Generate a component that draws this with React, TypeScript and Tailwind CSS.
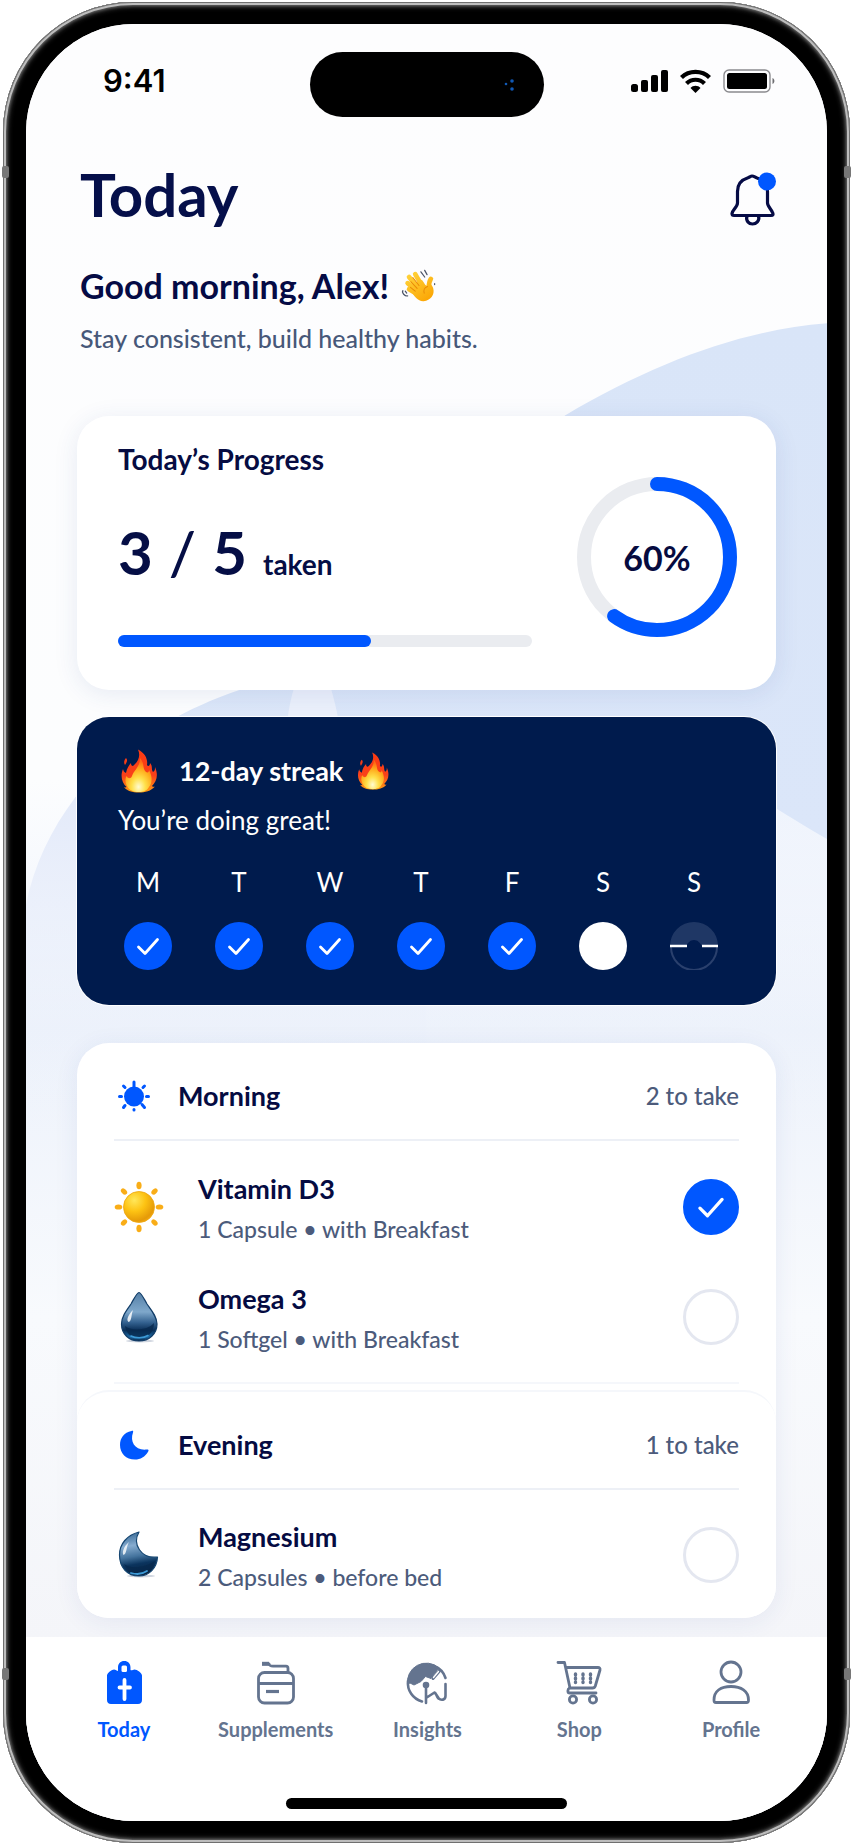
import { useState } from "react";

type Supplement = {
  id: string;
  name: string;
  dose: string;
  icon: React.ReactNode;
};

const days = [
  { label: "M", state: "done" },
  { label: "T", state: "done" },
  { label: "W", state: "done" },
  { label: "T", state: "done" },
  { label: "F", state: "done" },
  { label: "S", state: "today" },
  { label: "S", state: "next" },
];

/* ---------- Icons ---------- */

function CheckMark({ className }: { className: string }) {
  return (
    <svg viewBox="0 0 24 24" fill="none" stroke="#fff" strokeWidth="2.8" strokeLinejoin="round" strokeLinecap="round" className={className} aria-hidden="true">
      <path d="M2.5 13 L9 19.5 L21.5 5.5" />
    </svg>
  );
}

function StatusIcons() {
  return (
    <svg width="146" height="26" viewBox="0 0 146 26" aria-hidden="true">
      <rect x="1" y="16" width="7" height="8" rx="2.5" />
      <rect x="11" y="12" width="7" height="12" rx="2" />
      <rect x="21" y="7" width="7" height="17" rx="2" />
      <rect x="31" y="2" width="7" height="22" rx="2" />
      <g fill="none" stroke="#000" strokeWidth="4.2">
        <path d="M51.5 9.5 C59 2 72 2 79.5 9.5" />
        <path d="M56.5 15.5 C61.5 10.5 69.5 10.5 74.5 15.5" />
      </g>
      <path d="M60.5 20 C63 17 68 17 70.5 20 L65.5 25 Z" />
      <rect x="94" y="2" width="46" height="22" rx="5" fill="none" stroke="#8b8b8f" strokeWidth="1.4" />
      <rect x="97" y="5" width="40" height="16" rx="2.5" />
      <path d="M142.5 10 C145 11 145 15 142.5 16 Z" fill="#6d6d70" />
    </svg>
  );
}

function BellIcon() {
  return (
    <svg width="46" height="54" viewBox="0 0 46 54" fill="none" stroke="#050b45" strokeWidth="3.2" strokeLinejoin="round" aria-hidden="true">
      <path d="M22 4 C20.5 4 19.5 5.5 17.5 6 C11 8 7.5 13 7.5 19.5 V31 C7.5 35 2.5 38 2 41.5 C2 43 2.5 43.5 4 43.5 H41 C43 43.5 43.5 42.5 42.5 40.5 C41 37 37.5 34 37.5 31 V19.5 C37.5 13 33.5 8 27 6 C25 5.5 24 4 22 4 Z" />
      <path d="M17 44 C15.500 49 19 52 22.500 52 C26 52 30 49 28.500 44" />
      <circle cx="37" cy="9.500" r="9" fill="#0057ff" stroke="none" />
    </svg>
  );
}

function WaveHand() {
  return (
    <svg width="36" height="36" viewBox="6 8 38 37" fill="none" strokeLinecap="round" role="img" aria-label="waving hand">
      <defs>
        <linearGradient id="hand" gradientUnits="userSpaceOnUse" x1="14" y1="14" x2="34" y2="42">
          <stop offset="0" stopColor="#ffd23a" />
          <stop offset="1" stopColor="#fba605" />
        </linearGradient>
      </defs>
      <g stroke="url(#hand)" strokeWidth="5">
        <path d="M29 28 L21 14" />
        <path d="M25 30 L14.5 17" />
        <path d="M23 32 L13 23.5" />
        <path d="M23 35 L14.5 30" />
        <path d="M35 32 C36 28 34.5 23 37.5 19" />
      </g>
      <path d="M19 25 L28 20 C31 24 32 27 34 26 C37 23 39 26 40 29 C42 36 37 42 30 42.5 C24 43 20 37 16.5 32 Z" fill="url(#hand)" />
      <g stroke="#e98a06" strokeWidth="1.1">
        <path d="M18.5 17.5 L25 26" />
        <path d="M16.5 22 L23 29" />
        <path d="M16 28 L21 32" />
        <path d="M34 27 C31 28 29.5 31 30.5 34" />
      </g>
      <g stroke="#4c5568" strokeWidth="1.3">
        <path d="M27 11.5 L31 17" />
        <path d="M31 10 L33.5 14.5" />
        <path d="M8 31.5 C6.5 33.5 10 37.5 13 37" />
        <path d="M10.5 32 L12 34" />
        <path d="M41.5 24 V25" />
      </g>
    </svg>
  );
}

function Flame({ className }: { className: string }) {
  return (
    <svg viewBox="0 0 36 44" className={className} role="img" aria-label="fire">
      <defs>
        <linearGradient id="flameOuter" x1="0" y1="0" x2="0" y2="1">
          <stop offset="0" stopColor="#fb3a12" />
          <stop offset="0.6" stopColor="#f9401a" />
          <stop offset="1" stopColor="#ff9d13" />
        </linearGradient>
        <radialGradient id="flameInner" cx="0.5" cy="0.85" r="0.75">
          <stop offset="0" stopColor="#fffbd0" />
          <stop offset="0.35" stopColor="#ffe04a" />
          <stop offset="0.7" stopColor="#ffab1c" />
          <stop offset="1" stopColor="#ff6a14" />
        </radialGradient>
      </defs>
      <path d="M17 0.5 C24 4 27 10 26 16 C27 18 29 17 29 14 C32 17 30 20 32 23 C34 22 34 20 34 18 C38 27 35 33 31 37 C32 38 33 38 34 37.5 C30 42 24 43.5 18 43.5 C11 43.5 6 42 3 38 C4 38.5 5 38.5 5.5 38 C1 34 -1 27 2 20 C2.5 22 3 23 5 24 C6 19 8 16 10 14 C10 16 10.5 17 12 17 C17 13 20 7 17 0.5 Z" fill="url(#flameOuter)" />
      <path d="M19 9 C24 15 21 19 25 23 C27 24 28 23 28 21 C32 28 31 35 28 38 C26 42 22 43 18 43 C12 43 8 41 6 37 C4 33 4 30 5.5 27 C7 30 10 30 11 27 C13 21 19 18 19 9 Z" fill="url(#flameInner)" />
      <path d="M5 9 C7 11 6 13 4 16 C2.5 14 3 11 5 9 Z" fill="#f43c17" />
    </svg>
  );
}

function SunGlyph() {
  return (
    <svg width="32" height="32" viewBox="0 0 32 32" fill="#0057ff" stroke="#0057ff" strokeWidth="3" strokeLinecap="round" aria-hidden="true">
      <circle cx="16" cy="16.5" r="10" stroke="none" />
      <path d="M16 2 V8 M16 29.5 V30 M1.5 16.5 H3.5 M28.5 16.5 H30.5 M5.5 6 L7 7.5 M26.5 6 L25 7.5 M5.5 27.5 L7 25.5 M26.5 27.5 L24 24.5" />
    </svg>
  );
}

function MoonGlyph() {
  return (
    <svg width="32" height="32" viewBox="0 0 32 32" fill="#0057ff" aria-hidden="true">
      <path d="M13.5 2 C15 1.5 15.5 2 15 3.5 C11.5 13 17.5 22 29 20.5 C30.5 20.5 31 21 30.2 22.5 C27 28 22.5 30.5 17 30.5 C8 30.5 2 24.5 2 16 C2 9 6 3.5 13.5 2 Z" />
    </svg>
  );
}

function SunIcon() {
  return (
    <svg width="50" height="52" viewBox="0 0 50 52" aria-hidden="true">
      <defs>
        <radialGradient id="sunBall" cx="0.35" cy="0.28" r="0.8">
          <stop offset="0" stopColor="#ffe75a" />
          <stop offset="0.45" stopColor="#fdc313" />
          <stop offset="0.85" stopColor="#e59a08" />
          <stop offset="1" stopColor="#f5ae12" />
        </radialGradient>
      </defs>
      <g fill="#f9ad17">
        <ellipse cx="25" cy="4.5" rx="2.6" ry="3.8" />
        <ellipse cx="25" cy="47.5" rx="2.6" ry="3.8" />
        <ellipse cx="4.5" cy="26" rx="3.8" ry="2.6" />
        <ellipse cx="45.5" cy="26" rx="3.8" ry="2.6" />
        <ellipse cx="10" cy="10.5" rx="3.6" ry="2.5" transform="rotate(45 10 10.5)" />
        <ellipse cx="40.5" cy="10.5" rx="3.6" ry="2.5" transform="rotate(-45 40.5 10.5)" />
        <ellipse cx="10" cy="41.5" rx="3.6" ry="2.5" transform="rotate(-45 10 41.5)" />
        <ellipse cx="40.5" cy="41.5" rx="3.6" ry="2.5" transform="rotate(45 40.5 41.5)" />
      </g>
      <circle cx="25" cy="26" r="15.5" fill="url(#sunBall)" stroke="#eda60f" strokeWidth="0.8" />
    </svg>
  );
}

function DropIcon() {
  return (
    <svg width="50" height="52" viewBox="0 0 50 52" aria-hidden="true">
      <defs>
        <linearGradient id="drop" x1="0" y1="0" x2="0" y2="1">
          <stop offset="0" stopColor="#557fa6" />
          <stop offset="0.4" stopColor="#7fa8cb" />
          <stop offset="0.62" stopColor="#33618f" />
          <stop offset="0.78" stopColor="#0a2f57" />
          <stop offset="0.92" stopColor="#1c6ba6" />
          <stop offset="1" stopColor="#06203f" />
        </linearGradient>
      </defs>
      <ellipse cx="26" cy="50" rx="14" ry="1.5" fill="#cfd5df" />
      <path d="M25 1.5 C27 1.5 29 6 33 13 C38 20 43 26 43 33 C43 43 35 50 25 50 C15 50 7.5 43 7.5 33 C7.5 26 12 20 17 13 C21 6 23 1.5 25 1.5 Z" fill="url(#drop)" stroke="#123d68" strokeWidth="1.2" />
      <path d="M11 35 C17 40 33 40 40 32 C40 42 33 47 25 47 C17 47 12 42 11 35 Z" fill="#08294e" opacity="0.8" />
      <path d="M17 45 C22 47.5 29 47.5 34 44.5" fill="none" stroke="#3d9ad6" strokeWidth="1.6" strokeLinecap="round" />
      <path d="M19 19 C14 24 12 29 14.5 31 C18 30 17 24 19 19 Z" fill="#fff" opacity="0.85" />
    </svg>
  );
}

function MoonIcon() {
  return (
    <svg width="50" height="52" viewBox="0 0 50 52" aria-hidden="true">
      <defs>
        <linearGradient id="moon" x1="0" y1="0" x2="0.15" y2="1">
          <stop offset="0" stopColor="#2c5f8c" />
          <stop offset="0.35" stopColor="#86acd0" />
          <stop offset="0.6" stopColor="#44739d" />
          <stop offset="0.78" stopColor="#0b345e" />
          <stop offset="1" stopColor="#082341" />
        </linearGradient>
      </defs>
      <ellipse cx="27" cy="47" rx="14" ry="1.4" fill="#cfd5df" />
      <path d="M25 3 C18 15 27 30 43.5 28 C43 39 35 47 25 47 C13 47 5.5 38 5.5 26 C5.5 15 13 6 25 3 Z" fill="url(#moon)" stroke="#164671" strokeWidth="1.2" strokeLinejoin="round" />
      <path d="M10 35 C18 41 32 38 41 32 C38 40 32 44 25 44 C18 44 13 41 10 35 Z" fill="#08294e" opacity="0.8" />
      <path d="M17 44 C22 45.5 28 45.5 33 42" fill="none" stroke="#3d9ad6" strokeWidth="1.8" strokeLinecap="round" />
      <path d="M15 13 C9 18 8 24 9.5 26 C13 25 12 18 15 13 Z" fill="#fff" opacity="0.8" />
    </svg>
  );
}

function TodayIcon() {
  return (
    <svg width="48" height="48" viewBox="0 0 48 48" aria-hidden="true">
      <path d="M18 12 V8.5 C18 4.5 20.5 2 24.3 2 C28 2 30.5 4.5 30.5 8.5 V11 C31.5 12 33 10.5 34.5 10.5 C37 10.5 42 14 42 16.5 V41 C42 43.5 40.5 45 38 45 H11 C8.5 45 7 43.5 7 41 V16.5 C7 14 12 10.5 14 10.5 C15.5 10.5 17 12 18 12 Z" fill="#0057ff" />
      <rect x="21.5" y="6.5" width="5.5" height="6.5" rx="1.5" fill="#fff" />
      <path d="M24.5 21 V40 M19.5 28.5 H30" stroke="#fff" strokeWidth="3.8" strokeLinecap="round" />
    </svg>
  );
}

function SupplementsIcon() {
  return (
    <svg width="48" height="48" viewBox="0 0 48 48" fill="none" stroke="#64748f" strokeWidth="2.8" strokeLinejoin="round" aria-hidden="true">
      <rect x="6.500" y="13.500" width="35" height="30.500" rx="6" />
      <path d="M7 24.500 H41" />
      <path d="M14 32.500 H27" strokeWidth="3.2" />
      <path d="M10 4.800 H17 C17.500 7 18.500 7.200 21 7.200 H34 C35.800 7.200 36 8 36 9.500 V13" />
      <path d="M10 4.800 H17" strokeWidth="4" />
    </svg>
  );
}

function InsightsIcon() {
  return (
    <svg width="48" height="48" viewBox="9 9 48 48" fill="none" stroke="#64748f" strokeWidth="2.600" strokeLinecap="round" strokeLinejoin="round" aria-hidden="true">
      <path d="M13.500 35 A19 19 0 0 1 45 18 L37 28.500 L31.500 26.500 L27 31.500 L20 35 L16 33 Z" fill="#64748f" strokeWidth="1" />
      <path d="M14 31 A19 19 0 0 0 28 51.500 M40 16 A19 19 0 0 1 51.500 28" />
      <path d="M45.500 21 L39 28.500" strokeWidth="3" />
      <path d="M44.500 21.500 L39.500 27.500" stroke="#fff" strokeWidth="1.400" />
      <path d="M32 36 V53 M32 48 L40.500 42.500 C42 42 42 46 44.500 48.500 M51.500 34 V46 C51.500 50 47 51 44.500 48 L41.500 43.500" />
      <circle cx="32" cy="35" r="2" fill="#64748f" />
    </svg>
  );
}

function ShopIcon() {
  return (
    <svg width="48" height="48" viewBox="0 0 48 48" fill="none" stroke="#64748f" strokeWidth="2.800" strokeLinecap="round" strokeLinejoin="round" aria-hidden="true">
      <path d="M3 3.500 H9.500 L15 29 H37.500 C39 29 39.800 28.500 40.300 27 L45 11 C45.300 9.500 44.500 8.500 43 8.500 H10.500" />
      <path d="M14.500 29 C12.500 30 12 34 15 34 H41" />
      <path d="M20.500 15 V23.500 M28 15 V23.500 M35.500 15 V23.500" strokeWidth="3.400" strokeDasharray="1 3" />
      <circle cx="18" cy="40.500" r="3.600" />
      <circle cx="38" cy="40.500" r="3.600" />
    </svg>
  );
}

function ProfileIcon() {
  return (
    <svg width="48" height="48" viewBox="0 0 48 48" fill="none" stroke="#64748f" strokeWidth="2.800" strokeLinejoin="round" aria-hidden="true">
      <circle cx="24" cy="13" r="10" />
      <path d="M7 41 C7 32 14 27.500 24 27.500 C34 27.500 41.500 32 41.500 41 C41.500 43 41 43.500 39.500 43.500 H9 C7.500 43.500 7 43 7 41 Z" />
    </svg>
  );
}

/* ---------- Data ---------- */

const morning: Supplement[] = [
  { id: "vitamin-d3", name: "Vitamin D3", dose: "1 Capsule • with Breakfast", icon: <SunIcon /> },
  { id: "omega-3", name: "Omega 3", dose: "1 Softgel • with Breakfast", icon: <DropIcon /> },
];

const evening: Supplement[] = [
  { id: "magnesium", name: "Magnesium", dose: "2 Capsules • before bed", icon: <MoonIcon /> },
];

const tabs = [
  { label: "Today", icon: <TodayIcon /> },
  { label: "Supplements", icon: <SupplementsIcon /> },
  { label: "Insights", icon: <InsightsIcon /> },
  { label: "Shop", icon: <ShopIcon /> },
  { label: "Profile", icon: <ProfileIcon /> },
];

/* ---------- Sections ---------- */

function Backdrop() {
  return (
    <svg className="absolute inset-0 h-full w-full" viewBox="0 0 801 1795" preserveAspectRatio="none" aria-hidden="true">
      <defs>
        <linearGradient id="page" x1="0" y1="0" x2="0" y2="1">
          <stop offset="0" stopColor="#fdfdfe" />
          <stop offset="0.42" stopColor="#fcfdfe" />
          <stop offset="0.5" stopColor="#f4f7fd" />
          <stop offset="0.56" stopColor="#edf2fb" />
          <stop offset="0.72" stopColor="#f8fafd" />
          <stop offset="0.9" stopColor="#f4f5f9" />
        </linearGradient>
        <linearGradient id="leftBlob" x1="0" y1="0" x2="0" y2="1">
          <stop offset="0" stopColor="#d9e5f8" />
          <stop offset="0.35" stopColor="#e6ecfa" />
          <stop offset="1" stopColor="#edf2fb" stopOpacity="0" />
        </linearGradient>
        <linearGradient id="rightBlob" x1="0" y1="0" x2="0" y2="1">
          <stop offset="0" stopColor="#d9e5f8" />
          <stop offset="1" stopColor="#dbe6f9" />
        </linearGradient>
        <linearGradient id="lowWave" x1="0" y1="0" x2="0" y2="1">
          <stop offset="0" stopColor="#eaf0fc" />
          <stop offset="1" stopColor="#edf2fb" stopOpacity="0" />
        </linearGradient>
      </defs>
      <rect width="801" height="1795" fill="url(#page)" />
      <path d="M0 880 C8 840 25 805 49 773 C85 730 140 690 214 665 C260 645 320 645 400 650 V1100 H0 Z" fill="url(#leftBlob)" />
      <path d="M300 640 H801 V1100 H300 Z" fill="url(#lowWave)" />
      <path d="M801 299 C713 306 628 339 539 391 L290 660 V700 L730 770 C755 787 780 802 801 814 Z" fill="url(#rightBlob)" />
      <path d="M261 700 C263 680 266 670 269 660 H304 C308 675 311 685 313 700 Z" fill="#ebf0fb" />
    </svg>
  );
}

function DayMark({ state }: { state: string }) {
  if (state === "done") {
    return (
      <span className="flex size-12 items-center justify-center rounded-full bg-[#0057ff]">
        <CheckMark className="size-6" />
      </span>
    );
  }
  if (state === "today") {
    return <span className="size-12 rounded-full bg-white" />;
  }
  return (
    <svg width="48" height="48" viewBox="0 0 48 48" fill="none" aria-hidden="true">
      <path d="M0 24 A24 24 0 0 1 48 24 H32 C30 21 28 18 24 18 C20 18 18 21 16 24 Z" fill="#1f3765" />
      <path d="M1 25 A23 23 0 0 0 47 25" stroke="#2a406d" strokeWidth="2" />
      <path d="M0 24 H17 M32 24 H48" stroke="#fff" strokeWidth="2.4" />
    </svg>
  );
}

function SectionHeader({ icon, title, note }: { icon: React.ReactNode; title: string; note: string }) {
  return (
    <div className="flex items-center border-b-2 border-[#edf0f6] pb-[27px] pl-1">
      {icon}
      <h2 className="ml-7 flex-1 text-[27px] leading-8 font-bold text-[#050b42]">{title}</h2>
      <span className="text-2xl font-medium text-[#4c5b7b]">{note}</span>
    </div>
  );
}

function SupplementRow({ item, taken, onToggle }: { item: Supplement; taken: boolean; onToggle: () => void }) {
  return (
    <li className="flex h-[110px] items-center">
      {item.icon}
      <label htmlFor={item.id} className="ml-[34px] flex-1 pt-1">
        <span className="block text-[27px] leading-10 font-bold text-[#050b42]">{item.name}</span>
        <span className="block text-[23px] leading-10 font-medium text-[#4c5b7b]">{item.dose}</span>
      </label>
      <span className="relative size-14">
        <input
          id={item.id}
          type="checkbox"
          checked={taken}
          onChange={onToggle}
          className="block size-14 appearance-none rounded-full border-3 border-[#e4e7f0] bg-white checked:border-[#0057ff] checked:bg-[#0057ff]"
        />
        {taken && <CheckMark className="pointer-events-none absolute inset-[14px] size-7" />}
      </span>
    </li>
  );
}

export default function App() {
  const [taken, setTaken] = useState<string[]>(["vitamin-d3"]);
  const [tab, setTab] = useState("Today");

  const toggle = (id: string) => {
    setTaken((prev) => (prev.includes(id) ? prev.filter((t) => t !== id) : [...prev, id]));
  };

  return (
    <div className="bg-white px-[3px] py-0.5 font-['Lato','Open_Sans',sans-serif]">
      {/* Phone body */}
      <div className="relative rounded-[130px] bg-black px-[23px] py-[22px] shadow-[inset_0_0_0_1px_#6f6f6f,inset_0_0_0_3px_#bdbdbd,inset_0_0_3px_4px_#6a6a6a,inset_0_0_4px_6px_#262626]">
        <span className="absolute top-[164px] -left-px h-3 w-[7px] rounded-xs bg-[#777]" />
        <span className="absolute top-[164px] -right-px h-3 w-[7px] rounded-xs bg-[#777]" />
        <span className="absolute bottom-[163px] -left-px h-3 w-[7px] rounded-xs bg-[#777]" />
        <span className="absolute -right-px bottom-[163px] h-3 w-[7px] rounded-xs bg-[#777]" />

        <div className="relative overflow-hidden rounded-[108px] bg-white">
          <Backdrop />

          {/* Status bar */}
          <div className="relative grid grid-cols-[1fr_auto_1fr] items-center px-[51px] pt-7">
            <span className="pb-2 pl-[26px] font-['Inter',sans-serif] text-[31px] leading-9 font-semibold text-black">9:41</span>
            <div className="flex h-[65px] w-[234px] items-center justify-end rounded-full bg-black pr-[27px]">
              <svg width="14" height="14" viewBox="0 0 14 14" fill="#1159b5" aria-hidden="true">
                <circle cx="3" cy="6" r="1.3" />
                <circle cx="9" cy="3" r="1.8" />
                <circle cx="9" cy="11" r="1.8" />
              </svg>
            </div>
            <div className="flex justify-end pb-2">
              <StatusIcons />
            </div>
          </div>

          <main className="relative px-[51px]">
            <header className="pt-[47px] pl-[3px]">
              <div className="flex items-start justify-between">
                <h1 className="text-[60px] leading-[60px] font-bold text-[#050f4a]">Today</h1>
                <button type="button" aria-label="Notifications" className="mt-2">
                  <BellIcon />
                </button>
              </div>
              <p className="mt-10 flex items-center gap-3 text-[34px] leading-10 font-bold text-[#050b45]">
                Good morning, Alex! <WaveHand />
              </p>
              <p className="mt-4 text-[25px] leading-8 font-medium text-[#475879]">Stay consistent, build healthy habits.</p>
            </header>

            {/* Progress */}
            <section className="mt-[62px] flex gap-[45px] rounded-[32px] bg-white pt-[27px] pr-[39px] pb-[43px] pl-[41px] shadow-[0_4px_24px_rgba(40,70,150,0.1)]">
              <div className="flex-1">
                <h2 className="text-[28px] leading-8 font-bold text-[#060c42]">Today’s Progress</h2>
                <p className="mt-[47px] flex items-baseline text-[60px] leading-[60px] font-bold text-[#050e45]">
                  <span>3</span>
                  <span className="mx-4 font-medium">/</span>
                  <span>5</span>
                  <span className="ml-4 text-[28px] leading-8">taken</span>
                </p>
                <div role="progressbar" aria-label="Taken today" aria-valuenow={60} className="mt-[53px] h-3 rounded-full bg-[#eaecf0]">
                  <div className="h-3 w-[61%] rounded-full bg-[#0057ff]" />
                </div>
              </div>
              <div className="relative mb-[10px] size-40 self-end">
                <svg viewBox="0 0 160 160" fill="none" strokeWidth="14" className="size-40 -rotate-90" aria-hidden="true">
                  <circle cx="80" cy="80" r="73" stroke="#eaecf0" />
                  <circle cx="80" cy="80" r="73" stroke="#0057ff" strokeLinecap="round" pathLength="100" strokeDasharray="60 40" />
                </svg>
                <span className="absolute inset-0 flex items-center justify-center text-[34px] font-bold text-[#060b3f]">60%</span>
              </div>
            </section>

            {/* Streak */}
            <section className="mt-[27px] rounded-[32px] bg-[#001b4d] pt-8 pr-[58px] pb-[35px] pl-[41px] text-white shadow-[0_0_0_1px_#ffffff]">
              <div className="flex items-center pl-[3px]">
                <Flame className="h-11 w-9" />
                <h2 className="mr-3.5 ml-[22px] text-[27px] leading-8 font-bold">12-day streak</h2>
                <Flame className="h-[38px] w-8" />
              </div>
              <p className="mt-[11px] text-[26px] leading-8">You’re doing great!</p>
              <ul className="mt-[30px] flex justify-between pl-1.5">
                {days.map((day, i) => (
                  <li key={i} className="flex w-12 flex-col items-center gap-6 text-[26px] leading-8">
                    {day.label}
                    <DayMark state={day.state} />
                  </li>
                ))}
              </ul>
            </section>

            {/* Schedule */}
            <div className="mt-[38px] rounded-[32px] bg-white shadow-[0_4px_24px_rgba(40,70,150,0.08)]">
              <section className="mx-[37px] border-b-2 border-[#f5f7fb] pt-[37px] pb-2.5">
                <SectionHeader icon={<SunGlyph />} title="Morning" note="2 to take" />
                <ul className="pt-[11px]">
                  {morning.map((item) => (
                    <SupplementRow key={item.id} item={item} taken={taken.includes(item.id)} onToggle={() => toggle(item.id)} />
                  ))}
                </ul>
              </section>
              <section className="mt-1.5 rounded-[32px] border-t-2 border-[#f5f7fb] bg-white px-[37px] pt-[37px] pb-2">
                <SectionHeader icon={<MoonGlyph />} title="Evening" note="1 to take" />
                <ul className="pt-2.5">
                  {evening.map((item) => (
                    <SupplementRow key={item.id} item={item} taken={taken.includes(item.id)} onToggle={() => toggle(item.id)} />
                  ))}
                </ul>
              </section>
            </div>
          </main>

          {/* Tab bar */}
          <nav className="relative mt-[19px] bg-white pt-[22px] pb-3">
            <div className="grid grid-cols-5 pr-5 pl-[22px]">
              {tabs.map((t) => (
                <button
                  key={t.label}
                  type="button"
                  onClick={() => setTab(t.label)}
                  className={`flex flex-col items-center gap-2.5 text-xl leading-6 font-bold ${tab === t.label ? "text-[#0057ff]" : "text-[#64748f]"}`}
                >
                  {t.icon}
                  {t.label}
                </button>
              ))}
            </div>
            <div className="mx-auto mt-[57px] h-[11px] w-[281px] rounded-full bg-black" />
          </nav>
        </div>
      </div>
    </div>
  );
}
